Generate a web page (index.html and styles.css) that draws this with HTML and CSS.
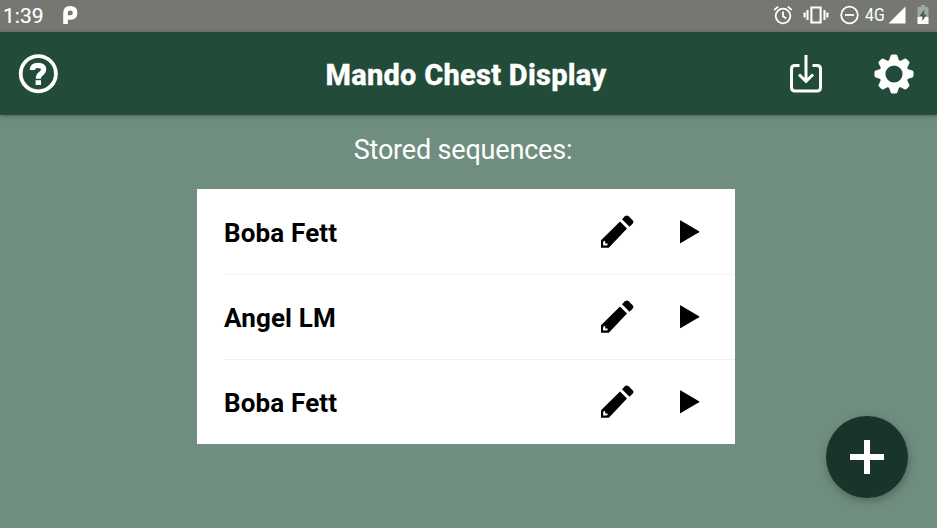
FILE: index.html
```html
<!DOCTYPE html>
<html lang="en">
<head>
<meta charset="utf-8">
<title>Mando Chest Display</title>
<link rel="stylesheet" href="styles.css">
</head>
<body>
<svg class="defs" aria-hidden="true">
  <symbol id="pencil" viewBox="0 0 34 34">
    <path fill-rule="evenodd" d="M1 25.3 20 6.4 27 13.4 8.8 32.8H1ZM3.1 27.5Q3.1 25.6 5.2 26V28.4H7.7Q8 30.6 6 30.6H3.1Z"/>
    <path d="M22 4.3 25 1.3Q26.8 -.3 28.6 1.3L32.6 5.3Q34.3 7.1 32.6 8.8L29.5 11.8Z"/>
  </symbol>
  <symbol id="play" viewBox="0 0 20 24"><path d="M0 .8Q0 0 .8.4L19 11.2Q19.8 11.7 19 12.2L.8 23Q0 23.4 0 22.6Z"/></symbol>
</svg>
<div class="status">
  <span class="time">1:39</span>
  <svg class="parking" width="16" height="20" viewBox="0 0 16 20"><path fill-rule="evenodd" d="M1.2 8.2Q1.2 1 8.3 1Q15.4 1 15.4 7.8Q15.4 14.8 8.3 14.8H5.8V19H1.2ZM5.8 8V10.3H8.3Q10.8 10.3 10.8 7.9Q10.8 5.4 8.3 5.4Q5.8 5.4 5.8 8Z"/></svg>
  <div class="indicators">
    <svg width="20" height="20" viewBox="0 0 20 20" class="line"><circle cx="10" cy="11" r="7.3"/><path d="M10 6.5V11.3L13.2 13.4M1.2 5 5.2 1.6M18.8 5 14.8 1.6"/></svg>
    <svg width="26" height="20" viewBox="0 0 26 20" class="line thick"><path d="M8.4 2.5H17.6V17.5H8.4ZM4.5 5V15M21.5 5V15M1.6 7.4V12.6M24.4 7.4V12.6"/></svg>
    <svg width="20" height="20" viewBox="0 0 20 20" class="line"><circle cx="10.5" cy="10" r="8.3"/><path d="M6 10H15"/></svg>
    <span class="net">4G</span>
    <svg width="18" height="18" viewBox="0 0 18 18"><path d="M17.5 .5V17.5H.5Z"/></svg>
    <svg class="battery" width="12" height="20" viewBox="0 0 12 20"><path class="empty" d="M4 0H8V2H11.5V12H.5V2H4Z"/><path d="M.5 12H11.5V19H.5Z"/><path class="bolt" d="M7.5 4.5 2.5 11H5.3V16L9.8 9.5H7Z"/></svg>
  </div>
</div>
<header class="bar">
  <button class="icon-btn" aria-label="Help"><svg width="40" height="40" viewBox="0 0 40 40"><circle class="ring" cx="20.3" cy="19.7" r="17.6"/><path class="hook" d="M14.3 16Q14.5 11.3 20 11.3Q25.6 11.3 25.6 15.6Q25.6 17.8 22.8 19.8Q20.3 21.5 20.3 24.8"/><path d="M17.6 26.2H23V31H17.6Z"/></svg></button>
  <h1>Mando Chest Display</h1>
  <div class="actions">
    <button class="icon-btn" aria-label="Import"><svg width="32" height="38" viewBox="0 0 32 38" class="import"><path d="M9.5 10.5H5Q1.5 10.5 1.5 14V32.5Q1.5 36 5 36H27Q30.5 36 30.5 32.5V14Q30.5 10.5 27 10.5H22.5"/><path d="M16 0V26M9 19.5 16 26.5 23 19.5"/></svg></button>
    <button class="icon-btn" aria-label="Settings"><svg width="40" height="40" viewBox="-20 -20 40 40">
      <g id="teeth"><path id="tooth" d="M-5.5 -12 -3.4 -18.2Q-3 -19.5 -1.8 -19.5H1.8Q3 -19.5 3.4 -18.2L5.5 -12Z"/><use href="#tooth" transform="rotate(45)"/><use href="#tooth" transform="rotate(90)"/><use href="#tooth" transform="rotate(135)"/><use href="#tooth" transform="rotate(180)"/><use href="#tooth" transform="rotate(225)"/><use href="#tooth" transform="rotate(270)"/><use href="#tooth" transform="rotate(315)"/></g>
      <circle class="cog" r="11.6"/></svg></button>
  </div>
</header>
<main>
  <p class="caption">Stored sequences:</p>
  <ul class="list">
    <li><span class="name">Boba Fett</span><svg class="edit"><use href="#pencil"/></svg><svg class="run"><use href="#play"/></svg></li>
    <li><span class="name">Angel LM</span><svg class="edit"><use href="#pencil"/></svg><svg class="run"><use href="#play"/></svg></li>
    <li><span class="name">Boba Fett</span><svg class="edit"><use href="#pencil"/></svg><svg class="run"><use href="#play"/></svg></li>
  </ul>
</main>
<button class="fab" aria-label="Add"><svg width="34" height="34" viewBox="0 0 34 34"><path d="M14 0H20V14H34V20H20V34H14V20H0V14H14Z"/></svg></button>
</body>
</html>
```
FILE: styles.css
```css
* { box-sizing: border-box; }
body { margin: 0; height: 528px; overflow: hidden; background: #6f8e7f; font-family: Roboto, sans-serif; color: #fff; }
svg { display: block; fill: #fff; }
.defs { position: absolute; width: 0; height: 0; }
.status { height: 32px; background: #747772; display: flex; align-items: center; padding: 0 8px 2px 3px; }
.time { font-size: 21px; line-height: 30px; padding-top: 1px; -webkit-text-stroke: 0.2px #fff; width: 59px; }
.indicators { margin-left: auto; display: flex; align-items: center; }
.indicators svg + svg { margin-left: 10px; }
.line { fill: none; stroke: #fff; stroke-width: 1.8; }
.thick { stroke-width: 2.1; }
.net { font-size: 18px; line-height: 30px; margin: 0 4px 0 6px; width: 19px; transform: scaleX(0.88); transform-origin: left; }
.indicators .battery { margin-left: 11px; }
.empty { fill: #9dac9f; }
.bolt { fill: #4f5d52; }
.bar { position: relative; height: 83px; background: #234b3a; display: grid; grid-template-columns: 200px 1fr 200px; align-items: center; padding: 0 23px 0 18px; box-shadow: 0 1px 4px rgba(0, 0, 0, 0.3); }
.icon-btn { border: 0; padding: 0; background: none; }
.ring { fill: none; stroke: #fff; stroke-width: 3.8; }
.hook { fill: none; stroke: #fff; stroke-width: 5.2; }
h1 { margin: 3px 0 0; font-size: 29px; line-height: 34px; font-weight: 800; letter-spacing: 0.27px; text-align: center; white-space: nowrap; -webkit-text-stroke: 0.3px #fff; }
.actions { display: flex; justify-content: flex-end; align-items: center; gap: 52.5px; }
.import { fill: none; stroke: #fff; stroke-width: 3; }
.icon-btn .import { margin-top: 1px; }
.cog { fill: none; stroke: #fff; stroke-width: 6; }
.caption { margin: 19px 0 0; padding-right: 11px; font-size: 27px; line-height: 32px; letter-spacing: -0.18px; text-align: center; }
.list { list-style: none; width: 538px; margin: 23px 0 0 197px; padding: 0 0 0 27px; background: #fff; color: #000; }
.list li { height: 85px; display: flex; align-items: center; padding-right: 35px; }
.list li + li { border-top: 1px solid #efefef; }
.list li:nth-child(2) { border-top-color: #f6f6f6; }
.list svg { fill: #000; }
.name { flex: 1; font-size: 26px; font-weight: 700; line-height: 32px; letter-spacing: 0.15px; padding-top: 2px; }
.edit { width: 34px; height: 34px; overflow: visible; }
.run { width: 20px; height: 24px; margin-left: 46px; }
.fab { position: absolute; left: 826px; top: 416px; width: 82px; height: 82px; border: 0; border-radius: 50%; padding: 0; display: grid; place-items: center; background: #19342a; box-shadow: 1px 3px 8px rgba(0, 0, 0, 0.28); }
```
